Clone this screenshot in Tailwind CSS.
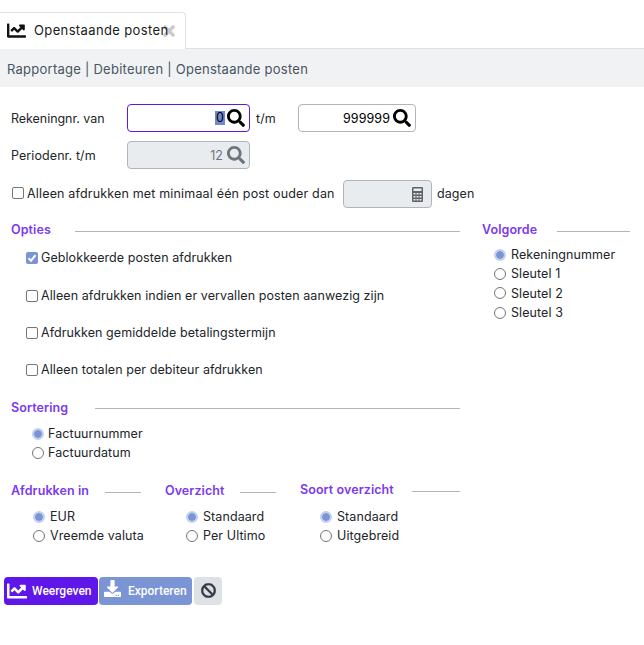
<!DOCTYPE html>
<html lang="nl">
<head>
<meta charset="UTF-8">
<title>Openstaande posten</title>
<script src="https://cdn.jsdelivr.net/npm/@tailwindcss/browser@4"></script>
</head>
<body class="bg-white text-[#212529] text-[12.5px] leading-[19px] tracking-[0.08px] [font-family:Inter,sans-serif] overflow-hidden">

<!-- tabs -->
<div class="pt-3 border-b border-[#dee2e6] h-[49px]">
  <div class="relative w-[186px] h-[37px] bg-white border border-l-0 border-b-0 border-[#dee2e6] rounded-tr-[4px] flex items-center pl-[7px] gap-[8px] text-[13px] tracking-[0.37px] text-[#1a1a1a]">
    <svg class="w-[19px] h-[19px] -mt-[2px]" viewBox="0 0 512 512" fill="#111"><path d="M496 384H64V80c0-8.84-7.16-16-16-16H16C7.16 64 0 71.16 0 80v336c0 17.67 14.33 32 32 32h464c8.84 0 16-7.16 16-16v-32c0-8.84-7.16-16-16-16zM464 96H345.94c-21.38 0-32.09 25.85-16.97 40.97l32.4 32.4L288 242.75l-73.37-73.37c-12.5-12.5-32.76-12.5-45.25 0l-68.69 68.69c-6.25 6.25-6.25 16.38 0 22.63l22.62 22.62c6.25 6.25 16.38 6.25 22.63 0L192 237.25l73.37 73.37c12.5 12.5 32.76 12.5 45.25 0l96-96 32.4 32.4c15.12 15.12 40.97 4.41 40.97-16.97V112c.01-8.84-7.15-16-15.99-16z"/></svg>
    <span class="relative z-10 -mt-[2px]">Openstaande posten</span>
    <svg class="absolute left-[163px] top-[12px] w-[12px] h-[12px]" viewBox="0 0 12 12" stroke="#cccccc" stroke-width="3.6" stroke-linecap="round"><path d="M2 2l8 8M10 2l-8 8"/></svg>
  </div>
</div>

<!-- breadcrumb -->
<div class="h-[38px] bg-[#f0f2f4] flex items-center pl-[7px] pt-[2px] text-[13px] tracking-[0.25px] text-[#4a5560]">Rapportage | Debiteuren | Openstaande posten</div>

<main class="pt-[17px]">
  <!-- rekeningnr -->
  <div class="flex items-center h-7 pl-[11px]">
    <label class="w-[116px] tracking-[-0.05px]">Rekeningnr. van</label>
    <div class="w-[123px] h-7 border border-[#5f16e8] rounded-[4px] flex items-center justify-end pr-[4px] gap-[2px] text-black">
      <span class="bg-[#7089cc] px-[1px] leading-[14px]">0</span>
      <svg class="w-[18px] h-[18px]" viewBox="0 0 512 512" fill="#000"><path d="M505 442.7L405.3 343c-4.5-4.5-10.6-7-17-7H372c27.6-35.3 44-79.7 44-128C416 93.1 322.9 0 208 0S0 93.1 0 208s93.1 208 208 208c48.3 0 92.7-16.4 128-44v16.3c0 6.4 2.5 12.5 7 17l99.7 99.7c9.4 9.4 24.6 9.4 33.9 0l28.3-28.3c9.4-9.4 9.4-24.6.1-34zM208 336c-70.7 0-128-57.2-128-128 0-70.7 57.2-128 128-128 70.7 0 128 57.2 128 128 0 70.7-57.2 128-128 128z"/></svg>
    </div>
    <span class="ml-[6px] w-[42px]">t/m</span>
    <div class="w-[118px] h-7 border border-[#adb5bd] rounded-[4px] flex items-center justify-end pr-[4px] gap-[3px] text-black">
      <span>999999</span>
      <svg class="w-[18px] h-[18px]" viewBox="0 0 512 512" fill="#000"><path d="M505 442.7L405.3 343c-4.5-4.5-10.6-7-17-7H372c27.6-35.3 44-79.7 44-128C416 93.1 322.9 0 208 0S0 93.1 0 208s93.1 208 208 208c48.3 0 92.7-16.4 128-44v16.3c0 6.4 2.5 12.5 7 17l99.7 99.7c9.4 9.4 24.6 9.4 33.9 0l28.3-28.3c9.4-9.4 9.4-24.6.1-34zM208 336c-70.7 0-128-57.2-128-128 0-70.7 57.2-128 128-128 70.7 0 128 57.2 128 128 0 70.7-57.2 128-128 128z"/></svg>
    </div>
  </div>

  <!-- periodenr -->
  <div class="flex items-center h-7 pl-[11px] mt-[9px]">
    <label class="w-[116px]">Periodenr. t/m</label>
    <div class="w-[123px] h-7 bg-[#e9ecef] border border-[#adb5bd] rounded-[4px] flex items-center justify-end pr-[4px] gap-[4px] text-[#6c757d]">
      <span>12</span>
      <svg class="w-[18px] h-[18px]" viewBox="0 0 512 512" fill="#6c757d"><path d="M505 442.7L405.3 343c-4.5-4.5-10.6-7-17-7H372c27.6-35.3 44-79.7 44-128C416 93.1 322.9 0 208 0S0 93.1 0 208s93.1 208 208 208c48.3 0 92.7-16.4 128-44v16.3c0 6.4 2.5 12.5 7 17l99.7 99.7c9.4 9.4 24.6 9.4 33.9 0l28.3-28.3c9.4-9.4 9.4-24.6.1-34zM208 336c-70.7 0-128-57.2-128-128 0-70.7 57.2-128 128-128 70.7 0 128 57.2 128 128 0 70.7-57.2 128-128 128z"/></svg>
    </div>
  </div>

  <!-- ouder dan -->
  <div class="flex items-center h-7 pl-[12px] mt-[11px]">
    <input type="checkbox" class="appearance-none w-3 h-3 m-0 -mt-[2px] rounded-[2px] border border-[#767676] bg-white">
    <span class="ml-[3px] w-[316px] -mt-[2px] tracking-[0.17px]">Alleen afdrukken met minimaal één post ouder dan</span>
    <div class="w-[89px] h-7 bg-[#e9ecef] border border-[#adb5bd] rounded-[4px] flex items-center justify-end pr-[8px]">
      <svg class="w-[11px] h-[15px]" viewBox="0 0 11 15" fill="#5f646a"><path d="M1 0h9a1 1 0 0 1 1 1v13a1 1 0 0 1-1 1H1a1 1 0 0 1-1-1V1a1 1 0 0 1 1-1zm.5 1.500v2.500h8V1.500zM1.500 6v1.500h2V6zm3 0v1.500h2V6zm3 0v1.500h2V6zm-6 3v1.500h2V9zm3 0v1.500h2V9zm3 0v1.500h2V9zm-6 3v1.500h2V12zm3 0v1.500h2V12zm3 0v1.500h2V12z" fill-rule="evenodd"/></svg>
    </div>
    <span class="ml-[5px] -mt-[2px]">dagen</span>
  </div>

  <!-- opties + volgorde -->
  <div class="flex mt-[12px]">
    <div class="w-[460px] pl-[11px]">
      <div class="flex items-center h-[19px] font-semibold text-[#7c3aed]"><span class="w-[64px]">Opties</span><span class="flex-1 h-px bg-[#adb5bd] mt-[3px]"></span></div>
      <div class="pl-[15px] pt-[9px]">
        <label class="flex items-center h-[19px] gap-[3px]">
          <span class="relative w-3 h-3 shrink-0">
            <input type="checkbox" checked class="appearance-none block w-3 h-3 m-0 rounded-[2px] bg-[#7a94d4]">
            <svg class="absolute inset-0 w-3 h-3 pointer-events-none" viewBox="0 0 12 12" fill="none" stroke="#fff" stroke-width="2"><path d="M2.500 6.200l2.500 2.500 4.500-5.500"/></svg>
          </span>
          Geblokkeerde posten afdrukken
        </label>
        <label class="flex items-center h-[19px] gap-[3px] mt-[19px]"><input type="checkbox" class="appearance-none w-3 h-3 m-0 rounded-[2px] border border-[#767676] bg-white">Alleen afdrukken indien er vervallen posten aanwezig zijn</label>
        <label class="flex items-center h-[19px] gap-[3px] mt-[18px]"><input type="checkbox" class="appearance-none w-3 h-3 m-0 rounded-[2px] border border-[#767676] bg-white">Afdrukken gemiddelde betalingstermijn</label>
        <label class="flex items-center h-[19px] gap-[3px] mt-[18px]"><input type="checkbox" class="appearance-none w-3 h-3 m-0 rounded-[2px] border border-[#767676] bg-white">Alleen totalen per debiteur afdrukken</label>
      </div>
    </div>
    <div class="w-[148px] ml-[22px]">
      <div class="flex items-center h-[19px] font-semibold text-[#7c3aed]"><span class="w-[75px]">Volgorde</span><span class="flex-1 h-px bg-[#adb5bd] mt-[3px]"></span></div>
      <div class="pl-[12px] pt-[6px]">
        <label class="flex items-center h-[19.3px] gap-[5px]"><input type="radio" name="volgorde" checked class="appearance-none shrink-0 w-3 h-3 m-0 rounded-full border border-[#767676] bg-white bg-clip-padding checked:border-2 checked:border-[#c3cfee] checked:bg-[#7a94d4]">Rekeningnummer</label>
        <label class="flex items-center h-[19.3px] gap-[5px]"><input type="radio" name="volgorde" class="appearance-none shrink-0 w-3 h-3 m-0 rounded-full border border-[#767676] bg-white bg-clip-padding checked:border-2 checked:border-[#c3cfee] checked:bg-[#7a94d4]">Sleutel 1</label>
        <label class="flex items-center h-[19.3px] gap-[5px]"><input type="radio" name="volgorde" class="appearance-none shrink-0 w-3 h-3 m-0 rounded-full border border-[#767676] bg-white bg-clip-padding checked:border-2 checked:border-[#c3cfee] checked:bg-[#7a94d4]">Sleutel 2</label>
        <label class="flex items-center h-[19.3px] gap-[5px]"><input type="radio" name="volgorde" class="appearance-none shrink-0 w-3 h-3 m-0 rounded-full border border-[#767676] bg-white bg-clip-padding checked:border-2 checked:border-[#c3cfee] checked:bg-[#7a94d4]">Sleutel 3</label>
      </div>
    </div>
  </div>

  <!-- sortering -->
  <div class="w-[460px] pl-[11px] mt-[19px]">
    <div class="flex items-center h-[19px] font-semibold text-[#7c3aed]"><span class="w-[84px]">Sortering</span><span class="flex-1 h-px bg-[#adb5bd] mt-[1px]"></span></div>
    <div class="pl-[21px] pt-[7px]">
      <label class="flex items-center h-[19px] gap-[4px]"><input type="radio" name="sortering" checked class="appearance-none shrink-0 w-3 h-3 m-0 rounded-full border border-[#767676] bg-white bg-clip-padding checked:border-2 checked:border-[#c3cfee] checked:bg-[#7a94d4]">Factuurnummer</label>
      <label class="flex items-center h-[19px] gap-[4px]"><input type="radio" name="sortering" class="appearance-none shrink-0 w-3 h-3 m-0 rounded-full border border-[#767676] bg-white bg-clip-padding checked:border-2 checked:border-[#c3cfee] checked:bg-[#7a94d4]">Factuurdatum</label>
    </div>
  </div>

  <!-- afdrukken in, overzicht, soort -->
  <div class="flex w-[460px] pl-[11px] mt-[19px]">
    <div class="w-[130px]">
      <div class="flex items-center h-[19px] font-semibold text-[#7c3aed]"><span class="w-[94px] shrink-0">Afdrukken in</span><span class="flex-1 h-px bg-[#adb5bd] mt-[3px]"></span></div>
      <div class="pl-[22px] pt-[7px] whitespace-nowrap">
        <label class="flex items-center h-[19px] gap-[5px]"><input type="radio" name="valuta" checked class="appearance-none shrink-0 w-3 h-3 m-0 rounded-full border border-[#767676] bg-white bg-clip-padding checked:border-2 checked:border-[#c3cfee] checked:bg-[#7a94d4]">EUR</label>
        <label class="flex items-center h-[19px] gap-[5px]"><input type="radio" name="valuta" class="appearance-none shrink-0 w-3 h-3 m-0 rounded-full border border-[#767676] bg-white bg-clip-padding checked:border-2 checked:border-[#c3cfee] checked:bg-[#7a94d4]">Vreemde valuta</label>
      </div>
    </div>
    <div class="w-[111px] ml-[24px] mr-[24px]">
      <div class="flex items-center h-[19px] font-semibold text-[#7c3aed]"><span class="w-[75px] shrink-0">Overzicht</span><span class="flex-1 h-px bg-[#adb5bd] mt-[3px]"></span></div>
      <div class="pl-[21px] pt-[7px]">
        <label class="flex items-center h-[19px] gap-[5px]"><input type="radio" name="overzicht" checked class="appearance-none shrink-0 w-3 h-3 m-0 rounded-full border border-[#767676] bg-white bg-clip-padding checked:border-2 checked:border-[#c3cfee] checked:bg-[#7a94d4]">Standaard</label>
        <label class="flex items-center h-[19px] gap-[5px]"><input type="radio" name="overzicht" class="appearance-none shrink-0 w-3 h-3 m-0 rounded-full border border-[#767676] bg-white bg-clip-padding checked:border-2 checked:border-[#c3cfee] checked:bg-[#7a94d4]">Per Ultimo</label>
      </div>
    </div>
    <div class="flex-1 -mt-px">
      <div class="flex items-center h-[19px] font-semibold text-[#7c3aed]"><span class="w-[112px] shrink-0">Soort overzicht</span><span class="flex-1 h-px bg-[#adb5bd] mt-[3px]"></span></div>
      <div class="pl-[20px] pt-[8px]">
        <label class="flex items-center h-[19px] gap-[5px]"><input type="radio" name="soort" checked class="appearance-none shrink-0 w-3 h-3 m-0 rounded-full border border-[#767676] bg-white bg-clip-padding checked:border-2 checked:border-[#c3cfee] checked:bg-[#7a94d4]">Standaard</label>
        <label class="flex items-center h-[19px] gap-[5px]"><input type="radio" name="soort" class="appearance-none shrink-0 w-3 h-3 m-0 rounded-full border border-[#767676] bg-white bg-clip-padding checked:border-2 checked:border-[#c3cfee] checked:bg-[#7a94d4]">Uitgebreid</label>
      </div>
    </div>
  </div>

  <!-- knoppen -->
  <div class="flex pl-[4px] mt-[32px] gap-[1px] text-white text-[12px] font-medium tracking-normal [font-family:Roboto,sans-serif]">
    <button class="w-[94px] h-7 bg-[#5f16e8] rounded-[4px] flex items-center pl-[3px] gap-[5px]">
      <svg class="w-5 h-5" viewBox="0 0 512 512" fill="#fff"><path d="M496 384H64V80c0-8.84-7.16-16-16-16H16C7.16 64 0 71.16 0 80v336c0 17.67 14.33 32 32 32h464c8.84 0 16-7.16 16-16v-32c0-8.84-7.16-16-16-16zM464 96H345.94c-21.38 0-32.09 25.85-16.97 40.97l32.4 32.4L288 242.75l-73.37-73.37c-12.5-12.5-32.76-12.5-45.25 0l-68.69 68.69c-6.25 6.25-6.25 16.38 0 22.63l22.62 22.62c6.25 6.25 16.38 6.25 22.63 0L192 237.25l73.37 73.37c12.5 12.5 32.76 12.5 45.25 0l96-96 32.4 32.4c15.12 15.12 40.97 4.41 40.97-16.97V112c.01-8.84-7.15-16-15.99-16z"/></svg>
      Weergeven
    </button>
    <button class="w-[93px] h-7 bg-[#7a94d4] rounded-[4px] flex items-center pl-[5px] gap-[7px]">
      <svg class="w-[17px] h-[17px] -mt-[5px]" viewBox="0 0 512 512" fill="#fff"><path d="M216 0h80c13.3 0 24 10.7 24 24v168h87.7c17.8 0 26.7 21.5 14.1 34.1L269.7 378.3c-7.5 7.5-19.8 7.5-27.3 0L90.1 226.1c-12.6-12.6-3.7-34.1 14.1-34.1H192V24c0-13.3 10.7-24 24-24zm296 376v112c0 13.3-10.7 24-24 24H24c-13.300 0-24-10.700-24-24V376c0-13.300 10.700-24 24-24h146.700l49 49c20.100 20.100 52.500 20.100 72.600 0l49-49H488c13.300 0 24 10.700 24 24zm-124 88c0-11-9-20-20-20s-20 9-20 20 9 20 20 20 20-9 20-20zm64 0c0-11-9-20-20-20s-20 9-20 20 9 20 20 20 20-9 20-20z"/></svg>
      Exporteren
    </button>
    <button class="w-7 h-7 ml-[1px] bg-[#dee2e6] rounded-[4px] flex items-center justify-center">
      <svg class="w-[15px] h-[15px] -mt-px" viewBox="0 0 512 512" fill="#343a40" stroke="#343a40" stroke-width="15"><path d="M256 8C119.034 8 8 119.033 8 256s111.034 248 248 248 248-111.034 248-248S392.967 8 256 8zm130.108 117.892c65.448 65.448 70 165.481 20.677 235.637L150.47 105.216c70.204-49.356 170.226-44.735 235.638 20.676zM125.892 386.108c-65.448-65.448-70-165.481-20.677-235.637L361.53 406.784c-70.203 49.356-170.226 44.736-235.638-20.676z"/></svg>
    </button>
  </div>
</main>
</body>
</html>
